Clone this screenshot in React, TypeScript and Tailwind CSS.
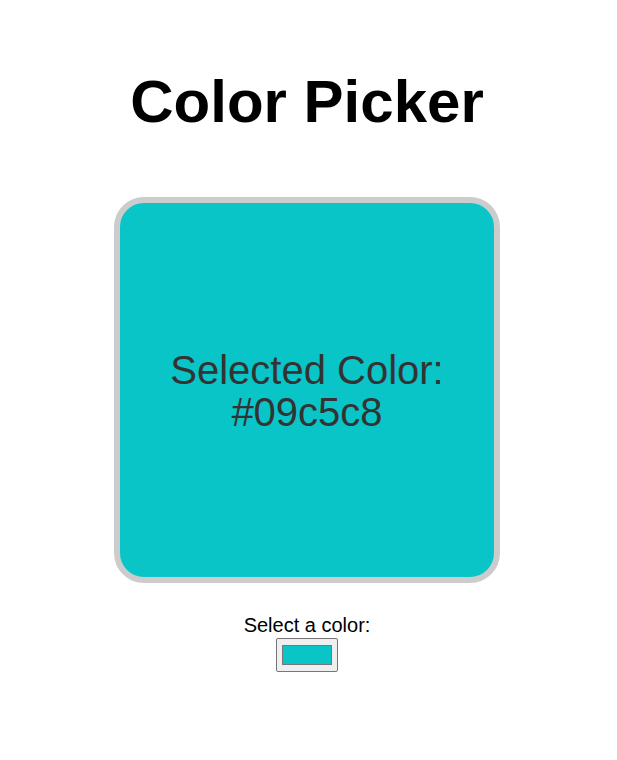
import React, { useState } from "react";

export default function App() {
  const [color, setColor] = useState("#09c5c8");
  return (
    <div className="flex flex-col items-center bg-white text-black min-h-[760px] pr-[3px] font-['Liberation_Sans',Arial,sans-serif]">
      <h1 className="mt-[67px] text-[60px] font-bold leading-[69px]">Color Picker</h1>
      <div
        className="mt-[61px] w-[386px] h-[386px] box-border border-[6px] border-[#cccccc] rounded-[30px] flex items-center justify-center text-center text-[40px] leading-[42px] text-[#333333]"
        style={{ backgroundColor: color }}
      >
        <div className="mt-[2px]">
          Selected Color:
          <br />
          {color}
        </div>
      </div>
      <label htmlFor="picker" className="mt-[31px] text-[20px] leading-[23px] text-black">
        Select a color:
      </label>
      <input
        id="picker"
        type="color"
        value={color}
        onChange={(e) => setColor(e.target.value)}
        className="mt-[1px] w-[62px] h-[34px] box-border border border-[#767676] rounded-[2px] bg-[#efefef] px-[3px] py-[2px] cursor-pointer"
      />
    </div>
  );
}
